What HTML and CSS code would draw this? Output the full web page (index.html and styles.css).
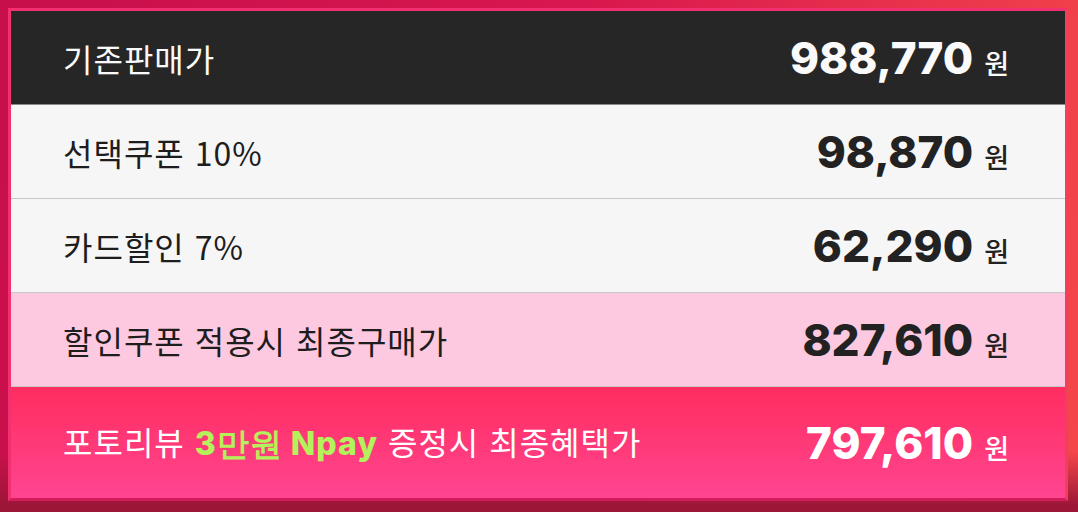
FILE: index.html
```html
<!DOCTYPE html>
<html lang="ko">
<head>
  <meta charset="UTF-8" />
  <meta name="viewport" content="width=device-width, initial-scale=1.0" />
  <title>가격 안내</title>
  <link rel="stylesheet" href="styles.css">
</head>
<body>
  <div class="price-table">
    <div class="row row-dark">
      <span class="label">기존판매가</span>
      <span class="price"><b>988,770</b><i>원</i></span>
    </div>
    <div class="row row-light">
      <span class="label">선택쿠폰 10%</span>
      <span class="price"><b>98,870</b><i>원</i></span>
    </div>
    <div class="row row-light">
      <span class="label">카드할인 7%</span>
      <span class="price"><b>62,290</b><i>원</i></span>
    </div>
    <div class="row row-pink">
      <span class="label">할인쿠폰 적용시 최종구매가</span>
      <span class="price"><b>827,610</b><i>원</i></span>
    </div>
    <div class="row row-hot">
      <span class="label">포토리뷰 <strong>3만원 Npay</strong> 증정시 최종혜택가</span>
      <span class="price"><b>797,610</b><i>원</i></span>
    </div>
  </div>
</body>
</html>
```

FILE: styles.css
```css
html, body { margin: 0; height: 100%; }
body {
  font-family: "Noto Sans CJK KR", "Noto Sans", sans-serif;
  background: linear-gradient(100deg, #c70f4c 0%, #d8174e 50%, #f5484a 100%);
  padding: 8px 10px 12px 8px;
  box-sizing: border-box;
  position: relative;
}
body::after {
  content: "";
  position: absolute; left: 0; right: 0; bottom: 0; height: 60px;
  background: linear-gradient(180deg, rgba(150, 20, 55, 0) 0%, #9c1638 90%);
  pointer-events: none;
}
.price-table {
  position: relative; z-index: 1;
  border: 3px solid #f2306f;
  border-right-color: #f04060;
  border-bottom-color: #d21d5a;
  display: flex; flex-direction: column;
}
.row {
  display: flex; align-items: center; justify-content: space-between;
  padding: 0 56px 0 52px;
  height: 93px;
  border-bottom: 1px solid #c7c7c7;
}
.label { font-size: 32px; font-weight: 400; letter-spacing: 1px; color: #1d1d1d; }
.price { display: flex; align-items: baseline; gap: 11px; }
.price b {
  font-family: Inter, "Noto Sans", sans-serif;
  font-weight: 800; font-size: 44px; letter-spacing: 0; color: #222;
}
.price i { font-style: normal; font-size: 27px; font-weight: 500; color: #222; }
.row-dark { background: #262626; border-bottom-color: #8a8a8a; }
.row-dark .label, .row-dark .price b, .row-dark .price i { color: #fafafa; }
.row-light { background: #f6f6f6; }
.row-pink { background: #fdc9e0; }
.row-hot {
  background: linear-gradient(180deg, #ff2c5f 0%, #ff3a7a 55%, #ff4592 100%);
  height: 111px; border-bottom: 0;
}
.row-hot .label, .row-hot .price b, .row-hot .price i { color: #fff; }
.row-hot .label strong { color: #b3f25a; font-family: Inter, sans-serif; font-weight: 800; }
```
